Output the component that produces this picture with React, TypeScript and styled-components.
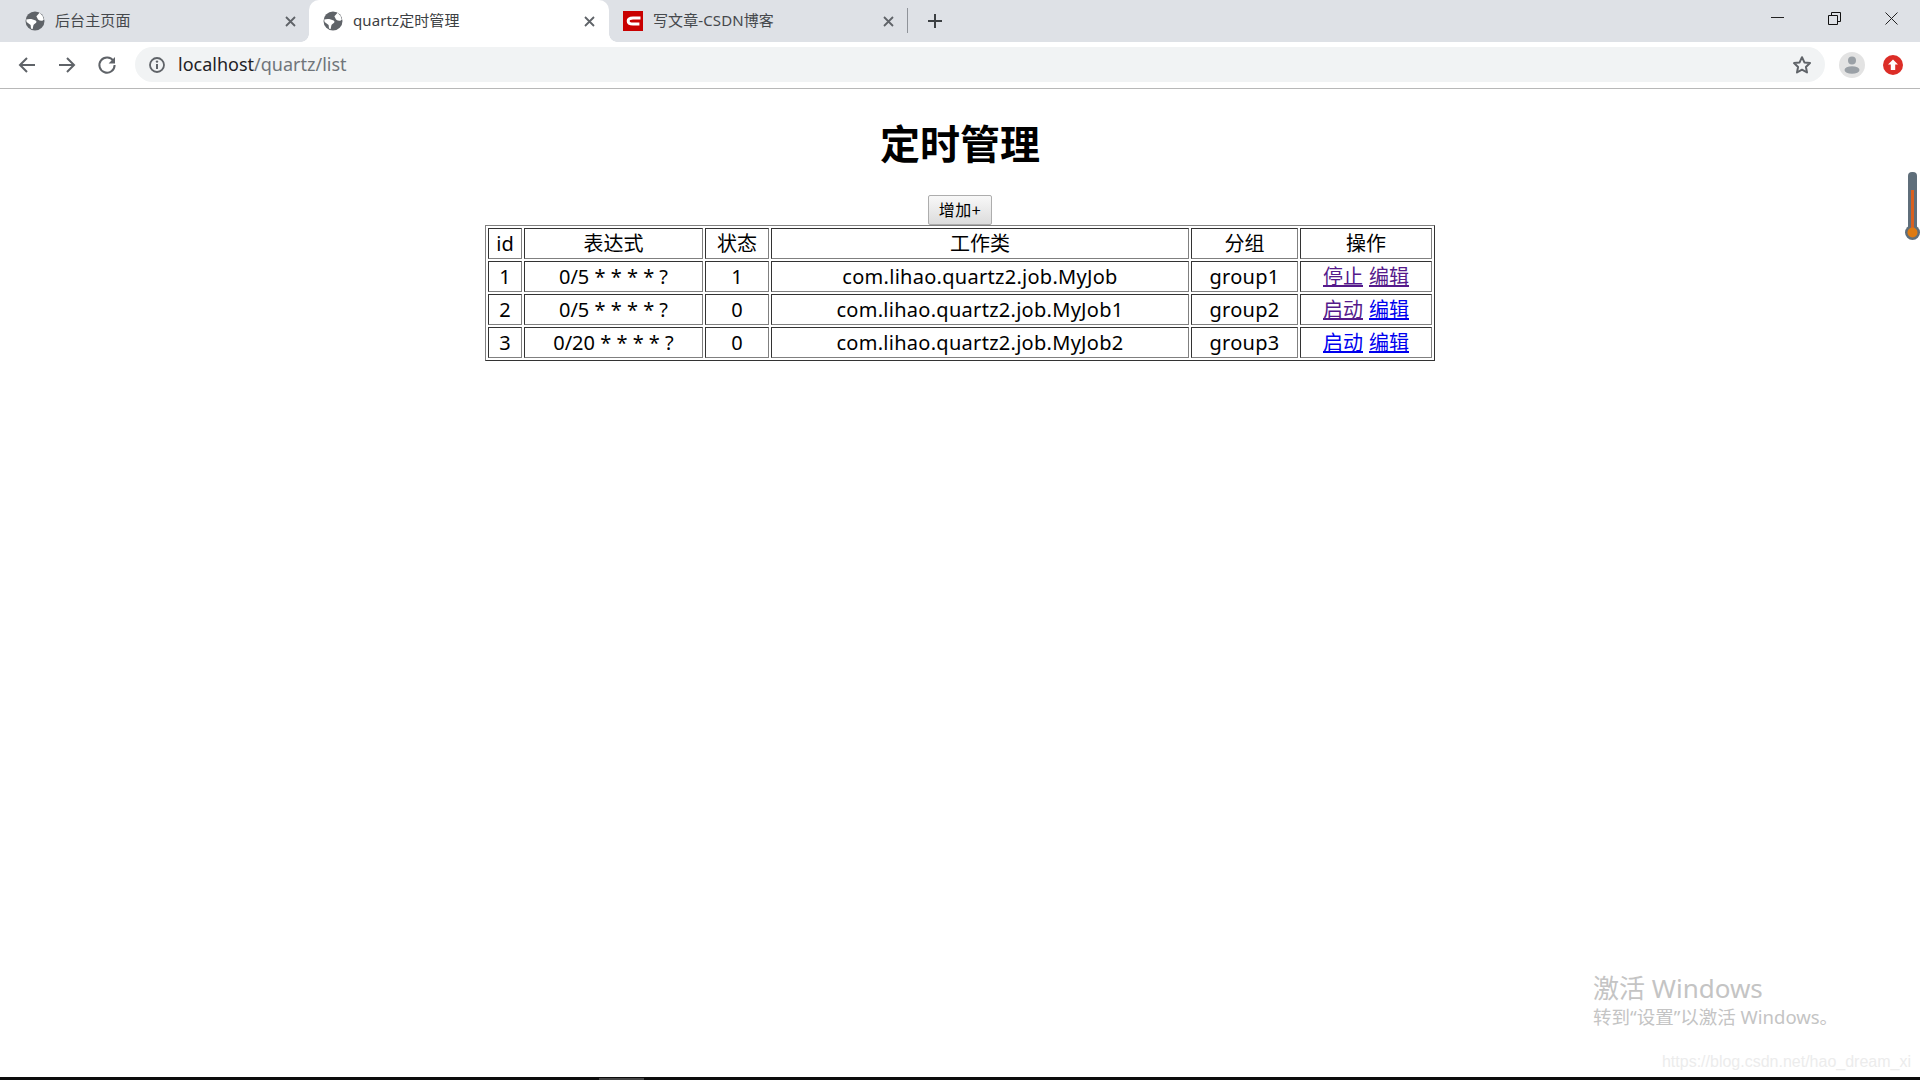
import React from "react";
import styled, { createGlobalStyle } from "styled-components";

const Global = createGlobalStyle`
  html, body { margin: 0; padding: 0; height: 100%; background: #fff; overflow: hidden; }
  body { font-family: "Noto Sans", "Noto Sans CJK SC", sans-serif; color: #000; }
  #root { height: 100%; }
`;

const Screen = styled.div`
  position: relative;
  height: 1080px;
  display: flex;
  flex-direction: column;
  overflow: hidden;
`;

const TabStrip = styled.div`
  display: flex;
  align-items: stretch;
  height: 42px;
  padding-left: 10px;
  background: #dee1e6;
  flex: none;
`;

const Tab = styled.div<{ $active?: boolean }>`
  position: relative;
  box-sizing: border-box;
  width: ${(p) => (p.$active ? 300 : 299)}px;
  margin-right: ${(p) => (p.$active ? -1 : 0)}px;
  z-index: ${(p) => (p.$active ? 1 : 0)};
  display: flex;
  align-items: center;
  gap: 10px;
  padding: 0 ${(p) => (p.$active ? 14 : 13)}px 0 ${(p) => (p.$active ? 14 : 15)}px;
  font-size: 15px;
  letter-spacing: 0.1px;
  color: ${(p) => (p.$active ? "#3c4043" : "#45484c")};
  background: ${(p) => (p.$active ? "#fff" : "transparent")};
  border-radius: 10px 10px 0 0;
  ${(p) =>
    p.$active &&
    `
    &::before, &::after {
      content: "";
      position: absolute;
      bottom: 0;
      width: 8px;
      height: 8px;
    }
    &::before { left: -8px; background: radial-gradient(circle at 0 0, #dee1e6 7.5px, #fff 8px); }
    &::after { right: -8px; background: radial-gradient(circle at 100% 0, #dee1e6 7.5px, #fff 8px); }
  `}
`;

const TabTitle = styled.span`
  flex: 1;
  white-space: nowrap;
  overflow: hidden;
  line-height: 20px;
  margin-top: -2px;
`;

const Divider = styled.div`
  width: 1px;
  height: 25px;
  align-self: center;
  margin-top: -1px;
  background: #8f9399;
`;

const NewTab = styled.div`
  display: flex;
  align-items: center;
  margin-left: 19px;
`;

const WindowButtons = styled.div`
  margin-left: auto;
  display: flex;
  align-items: flex-start;
  padding: 12px 22px 0 0;
  gap: 44px;
`;

const Toolbar = styled.div`
  flex: none;
  height: 45px;
  display: flex;
  align-items: center;
  padding: 0 0 1px 17px;
  background: #fff;
  border-bottom: 1px solid #b8b8b8;
`;

const NavIcons = styled.div`
  display: flex;
  align-items: center;
  gap: 20px;
`;

const AddressBar = styled.div`
  box-sizing: border-box;
  width: 1690px;
  height: 35px;
  margin-left: 18px;
  display: flex;
  align-items: center;
  padding: 0 13px 0 13px;
  border-radius: 18px;
  background: #f1f3f4;
`;

const Url = styled.div`
  margin-left: 12px;
  flex: 1;
  font-size: 18px;
  line-height: 24px;
  margin-top: -2px;
  color: #1f2124;
`;

const UrlPath = styled.span`
  color: #70757a;
`;

const Avatar = styled.div`
  margin-left: 14px;
  display: flex;
`;

const Ext = styled.div`
  margin-left: 18px;
  display: flex;
`;

const Page = styled.main`
  flex: 1;
  display: flex;
  flex-direction: column;
  align-items: center;
  background: #fff;
`;

const Title = styled.h1`
  margin: 26px 0 26px;
  height: 54px;
  font-size: 40px;
  line-height: 54px;
  font-weight: 700;
  font-family: "Noto Sans CJK SC", sans-serif;
`;

const AddButton = styled.button`
  box-sizing: border-box;
  width: 64px;
  height: 30px;
  padding: 0 0 2px;
  font-size: 16px;
  letter-spacing: 0.5px;
  line-height: 26px;
  font-family: "Noto Sans CJK SC", sans-serif;
  color: #000;
  border: 1px solid #adadad;
  border-radius: 2px;
  background: linear-gradient(#f8f8f8, #dcdcdc);
`;

const JobTable = styled.table`
  table-layout: fixed;
  width: 950px;
  border-collapse: separate;
  border-spacing: 2px;
  border: 1px solid;
  border-color: #808080 #333 #333 #808080;
  font-size: 20px;
`;

const Col = styled.col<{ $w: number }>`
  width: ${(p) => p.$w}px;
`;

const Cell = styled.td`
  box-sizing: border-box;
  height: 31px;
  padding: 0;
  text-align: center;
  white-space: nowrap;
  line-height: 29px;
  border: 1px solid;
  border-color: #333 #808080 #808080 #333;
`;

const NameCell = styled(Cell)`
  letter-spacing: 0.28px;
`;

const HeadCell = styled(Cell).attrs({ as: "th" })`
  font-weight: 400;
`;

const ActionLink = styled.a<{ $visited?: boolean }>`
  color: ${(p) => (p.$visited ? "#551a8b" : "#0000ee")};
  text-decoration: underline;
`;

const Actions = styled.span`
  display: inline-flex;
  gap: 6px;
`;

const Thermo = styled.svg`
  position: absolute;
  right: 0;
  top: 172px;
`;

const Watermark = styled.div`
  position: absolute;
  left: 1593px;
  top: 970px;
  color: #c4c4c4;
  pointer-events: none;
`;

const WatermarkTitle = styled.div`
  font-size: 26px;
  line-height: 36px;
`;

const WatermarkSub = styled.div`
  font-size: 18.5px;
  line-height: 22px;
`;

const Credit = styled.div`
  position: absolute;
  right: 9px;
  top: 1051px;
  font-family: "Liberation Sans", sans-serif;
  font-size: 16px;
  line-height: 22px;
  color: #ececec;
`;

const BottomEdge = styled.div`
  flex: none;
  height: 3px;
  display: flex;
  align-items: flex-end;
  padding-left: 599px;
  background: #0c0c0c;
`;

const BottomMark = styled.div`
  width: 45px;
  height: 2px;
  background: #444;
`;

const Globe = () => (
  <svg width="20" height="20" viewBox="0 0 20 20" style={{ flex: "none" }}>
    <circle cx="10" cy="10" r="9.5" fill="#5f6368" />
    <path d="M1.2 8.6C4 7.6 8 8 10.6 9.6c1.6 1 .8 2.6-.8 3.2-1 .4-1.4 1.4-1.6 2.4l-.6 3-1.6-.8-.4-3.4L1.6 11z" fill="#fff" />
    <path d="M11.4 5.2 14.6 1.7 17.6 5l1.2 3.4-1.4 1.4c-1.6.2-3.2-.2-4.4-1.2z" fill="#fff" />
  </svg>
);

const Csdn = () => (
  <svg width="20" height="20" viewBox="0 0 20 20" style={{ flex: "none" }}>
    <rect width="20" height="20" fill="#c90000" />
    <path d="M17.5 7H10C7 7 5.2 8.2 5.2 10s1.8 3 4.8 3h6.4" fill="none" stroke="#fff" strokeWidth="3" />
  </svg>
);

const CloseX = () => (
  <svg width="11" height="11" viewBox="0 0 11 11" style={{ flex: "none" }}>
    <path d="M1 1l9 9M10 1l-9 9" stroke="#5f6368" strokeWidth="1.8" fill="none" />
  </svg>
);

const rows = [
  { id: 1, cron: "0/5 * * * * ?", state: 1, job: "com.lihao.quartz2.job.MyJob", group: "group1", verb: "停止", v1: true, v2: true },
  { id: 2, cron: "0/5 * * * * ?", state: 0, job: "com.lihao.quartz2.job.MyJob1", group: "group2", verb: "启动", v1: true, v2: false },
  { id: 3, cron: "0/20 * * * * ?", state: 0, job: "com.lihao.quartz2.job.MyJob2", group: "group3", verb: "启动", v1: false, v2: false },
];

const widths = [34, 179, 64, 418, 107, 132];
const heads = ["id", "表达式", "状态", "工作类", "分组", "操作"];

export default function App() {
  return (
    <Screen>
      <Global />
      <TabStrip>
        <Tab>
          <Globe />
          <TabTitle>后台主页面</TabTitle>
          <CloseX />
        </Tab>
        <Tab $active>
          <Globe />
          <TabTitle>quartz定时管理</TabTitle>
          <CloseX />
        </Tab>
        <Tab>
          <Csdn />
          <TabTitle>写文章-CSDN博客</TabTitle>
          <CloseX />
        </Tab>
        <Divider />
        <NewTab>
          <svg width="16" height="16" viewBox="0 0 16 16">
            <path d="M8 1v14M1 8h14" stroke="#3c4043" strokeWidth="2" fill="none" />
          </svg>
        </NewTab>
        <WindowButtons>
          <svg width="13" height="13" viewBox="0 0 13 13">
            <path d="M0 5.5h13" stroke="#222" strokeWidth="1" fill="none" />
          </svg>
          <svg width="13" height="13" viewBox="0 0 13 13">
            <path d="M.5 3.5h9v9h-9zM3.5 3.5v-3h9v9h-3" stroke="#111" strokeWidth="1" fill="none" />
          </svg>
          <svg width="13" height="13" viewBox="0 0 13 13">
            <path d="M.5.5l12 12M12.5.5l-12 12" stroke="#222" strokeWidth="1" fill="none" />
          </svg>
        </WindowButtons>
      </TabStrip>
      <Toolbar>
        <NavIcons>
          <svg width="20" height="20" viewBox="0 0 20 20">
            <path d="M18 10H3M10 3l-7 7 7 7" stroke="#5f6368" strokeWidth="2" fill="none" />
          </svg>
          <svg width="20" height="20" viewBox="0 0 20 20">
            <path d="M2 10h15M10 3l7 7-7 7" stroke="#5f6368" strokeWidth="2" fill="none" />
          </svg>
          <svg width="20" height="20" viewBox="0 0 20 20">
            <path d="M16.4 6A7.6 7.6 0 1 0 17.6 10" stroke="#5f6368" strokeWidth="2" fill="none" />
            <path d="M18 2v6.4h-6.4z" fill="#5f6368" />
          </svg>
        </NavIcons>
        <AddressBar>
          <svg width="18" height="18" viewBox="0 0 18 18">
            <circle cx="9" cy="9" r="7" stroke="#5f6368" strokeWidth="1.8" fill="none" />
            <path d="M9 8v5" stroke="#5f6368" strokeWidth="2" />
            <circle cx="9" cy="5.6" r="1.2" fill="#5f6368" />
          </svg>
          <Url>
            localhost<UrlPath>/quartz/list</UrlPath>
          </Url>
          <svg width="20" height="20" viewBox="0 0 20 20">
            <path d="M10 2.2l2.4 5.2 5.6.7-4.1 3.8 1.1 5.6L10 14.7l-5 2.8 1.1-5.6L2 8.1l5.6-.7z" stroke="#5f6368" strokeWidth="2" strokeLinejoin="round" fill="none" />
          </svg>
        </AddressBar>
        <Avatar>
          <svg width="26" height="26" viewBox="0 0 26 26">
            <circle cx="13" cy="13" r="13" fill="#e3e3e3" />
            <circle cx="13" cy="8.5" r="4" fill="#9aa0a6" />
            <ellipse cx="13" cy="18" rx="7.5" ry="3.8" fill="#9aa0a6" />
          </svg>
        </Avatar>
        <Ext>
          <svg width="20" height="20" viewBox="0 0 20 20">
            <circle cx="10" cy="10" r="10" fill="#dc2d27" />
            <path d="M10 4.5l5 5h-2.8V15H7.8V9.5H5z" fill="#fff" />
          </svg>
        </Ext>
      </Toolbar>
      <Page>
        <Title>定时管理</Title>
        <AddButton>增加+</AddButton>
        <JobTable>
          <colgroup>
            {widths.map((w, i) => (
              <Col key={i} $w={w} />
            ))}
          </colgroup>
          <thead>
            <tr>
              {heads.map((h) => (
                <HeadCell key={h}>{h}</HeadCell>
              ))}
            </tr>
          </thead>
          <tbody>
            {rows.map((r) => (
              <tr key={r.id}>
                <Cell>{r.id}</Cell>
                <Cell>{r.cron}</Cell>
                <Cell>{r.state}</Cell>
                <NameCell>{r.job}</NameCell>
                <NameCell>{r.group}</NameCell>
                <Cell>
                  <Actions>
                    <ActionLink href="#" $visited={r.v1}>{r.verb}</ActionLink>
                    <ActionLink href="#" $visited={r.v2}>编辑</ActionLink>
                  </Actions>
                </Cell>
              </tr>
            ))}
          </tbody>
        </JobTable>
      </Page>
      <BottomEdge>
        <BottomMark />
      </BottomEdge>
      <Thermo width="15" height="68" viewBox="0 0 15 68">
        <rect x="3" y="0" width="9" height="60" rx="4" fill="#5f6e7a" />
        <circle cx="7.5" cy="60.5" r="7.5" fill="#5f6e7a" />
        <rect x="6" y="18" width="3" height="40" fill="#d9601f" />
        <circle cx="7.5" cy="60.5" r="5" fill="#dd7a12" />
      </Thermo>
      <Watermark>
        <WatermarkTitle>激活 Windows</WatermarkTitle>
        <WatermarkSub>转到“设置”以激活 Windows。</WatermarkSub>
      </Watermark>
      <Credit>https://blog.csdn.net/hao_dream_xi</Credit>
    </Screen>
  );
}
